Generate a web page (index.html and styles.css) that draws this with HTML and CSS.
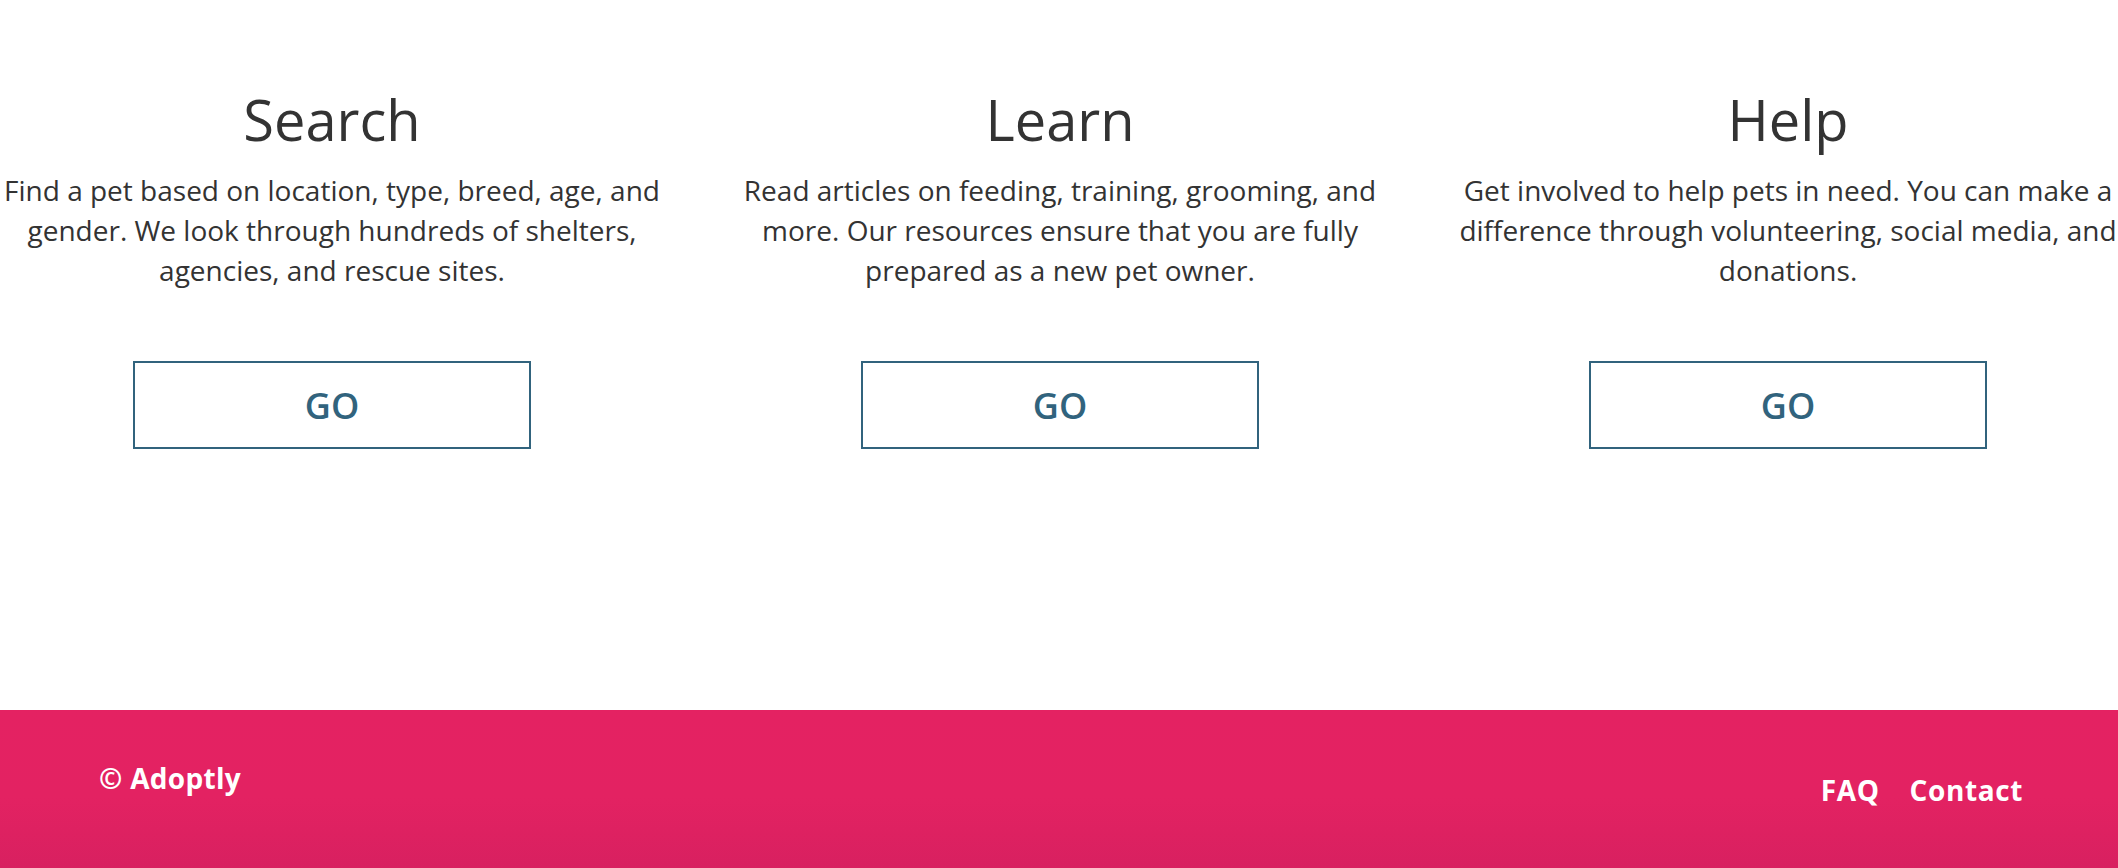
FILE: index.html
```html
<!DOCTYPE html>
<html lang="en">
<head>
<meta charset="utf-8">
<title>Adoptly</title>
<link rel="stylesheet" href="styles.css">
</head>
<body>
<main class="features">
  <section class="feature">
    <h2 class="feature-title">Search</h2>
    <p class="feature-text">Find a pet based on location, type, breed, age, and gender. We look through hundreds of shelters, agencies, and rescue sites.</p>
    <a class="go-btn" href="#">GO</a>
  </section>
  <section class="feature">
    <h2 class="feature-title">Learn</h2>
    <p class="feature-text">Read articles on feeding, training, grooming, and more. Our resources ensure that you are fully prepared as a new pet owner.</p>
    <a class="go-btn" href="#">GO</a>
  </section>
  <section class="feature">
    <h2 class="feature-title">Help</h2>
    <p class="feature-text">Get involved to help pets in need. You can make a difference through volunteering, social media, and donations.</p>
    <a class="go-btn" href="#">GO</a>
  </section>
</main>
<footer class="site-footer">
  <div class="footer-brand">© Adoptly</div>
  <nav class="footer-links">
    <a href="#">FAQ</a>
    <a href="#">Contact</a>
  </nav>
</footer>
</body>
</html>
```

FILE: styles.css
```css
html, body {
  margin: 0;
  padding: 0;
  background: #ffffff;
  overflow: hidden;
}

body {
  font-family: "Open Sans", "Liberation Sans", sans-serif;
  color: #333333;
  width: 2118px;
  height: 868px;
}

.features {
  display: grid;
  grid-template-columns: repeat(3, 728px);
  margin-left: -32px;
  padding-top: 86px;
  height: 710px;
  box-sizing: border-box;
}

.feature {
  display: flex;
  flex-direction: column;
  align-items: center;
  text-align: center;
}

.feature-title {
  margin: 0;
  font-size: 56px;
  line-height: 67px;
  font-weight: 400;
  color: #333333;
}

.feature-text {
  margin: 17px 0 0;
  width: 672px;
  font-size: 28px;
  line-height: 40px;
  color: #333333;
}

.go-btn {
  margin-top: 71px;
  width: 398px;
  height: 88px;
  box-sizing: border-box;
  border: 2px solid #31637d;
  display: flex;
  align-items: center;
  justify-content: center;
  font-size: 36px;
  font-weight: 560;
  color: #31637d;
  text-decoration: none;
}

.site-footer {
  height: 158px;
  box-sizing: border-box;
  padding: 50px 95px 0 99px;
  display: flex;
  justify-content: space-between;
  align-items: flex-start;
  background: linear-gradient(to bottom, #e42262 0%, #e32262 55%, #d82060 100%);
  font-family: "Open Sans", "Liberation Sans", sans-serif;
  font-weight: 700;
  color: #ffffff;
}

.footer-brand {
  font-size: 28px;
  line-height: 36px;
  letter-spacing: 0.3px;
}

.footer-links {
  margin-top: 12px;
  display: flex;
  gap: 30px;
  font-size: 28px;
  line-height: 36px;
  letter-spacing: 0.6px;
}

.footer-links a {
  color: #ffffff;
  text-decoration: none;
}
```
